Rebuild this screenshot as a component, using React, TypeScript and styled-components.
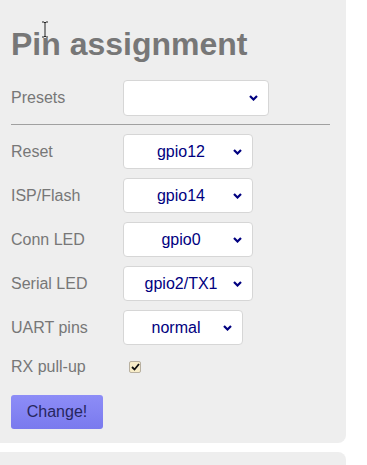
import React from "react";
import styled, { createGlobalStyle } from "styled-components";

const Global = createGlobalStyle`
  html, body { margin: 0; padding: 0; background: #ffffff; }
  body { font-family: "Liberation Sans", Arial, sans-serif; }
`;

const Page = styled.div`
  position: relative;
  width: 367px;
  height: 465px;
  overflow: hidden;
  display: flex;
  flex-direction: column;
  gap: 9px;
`;

const Panel = styled.section`
  width: 346px;
  box-sizing: border-box;
  background: #eeeeee;
  border-radius: 0 0 8px 0;
  padding: 26px 16px 14px 11px;
  display: flex;
  flex-direction: column;
`;

const NextPanel = styled.section`
  width: 346px;
  height: 40px;
  flex: none;
  background: #eeeeee;
  border-radius: 0 8px 0 0;
`;

const Title = styled.h1`
  margin: 0 0 17px 0;
  font-size: 32px;
  line-height: 37px;
  font-weight: bold;
  color: #777777;
`;

const Row = styled.div<{ $h?: number; $mb?: number }>`
  display: flex;
  align-items: center;
  height: ${(p) => p.$h ?? 35}px;
  margin-bottom: ${(p) => p.$mb ?? 9}px;
`;

const Label = styled.label`
  width: 112px;
  flex: none;
  font-size: 16px;
  color: #777777;
`;

const SelectBox = styled.div<{ $w: number; $h?: number }>`
  position: relative;
  width: ${(p) => p.$w}px;
  height: ${(p) => p.$h ?? 35}px;
  box-sizing: border-box;
  background: #ffffff;
  border: 1px solid #d6d6d6;
  border-radius: 4px;
  display: flex;
  align-items: center;
`;

const Select = styled.select`
  appearance: none;
  -webkit-appearance: none;
  border: none;
  background: transparent;
  outline: none;
  width: 100%;
  height: 100%;
  padding: 0 28px 0 14px;
  font-family: "Liberation Sans", Arial, sans-serif;
  font-size: 16px;
  color: #000080;
  text-align: center;
  text-align-last: center;
`;

const Chevron = styled.svg`
  position: absolute;
  right: 10px;
  top: 50%;
  margin-top: -3px;
  pointer-events: none;
`;

const Divider = styled.hr`
  margin: 0 0 9px 0;
  border: none;
  border-top: 1px solid #a0a0a0;
  height: 0;
  width: 319px;
`;

const Check = styled.span`
  margin-left: 6px;
  width: 12px;
  height: 12px;
  box-sizing: border-box;
  border: 1px solid #b8b0a0;
  border-radius: 2px;
  background: #f8edc9;
  display: flex;
  align-items: center;
  justify-content: center;
`;

const Button = styled.button`
  align-self: flex-start;
  width: 92px;
  height: 34px;
  border: none;
  border-radius: 3px;
  background: linear-gradient(#8d8df7, #7a7aee);
  color: #262660;
  font-family: "Liberation Sans", Arial, sans-serif;
  font-size: 16px;
  padding: 0;
`;

const Cursor = styled.svg`
  position: absolute;
  left: 41px;
  top: 21px;
`;

const ChevronIcon = () => (
  <Chevron width="9" height="6" viewBox="0 0 9 6">
    <path d="M1 1 L4.5 4.5 L8 1" fill="none" stroke="#000080" strokeWidth="2.2" />
  </Chevron>
);

const PinSelect = ({ w, value, h }: { w: number; value: string; h?: number }) => (
  <SelectBox $w={w} $h={h}>
    <Select defaultValue={value}>
      <option value={value}>{value}</option>
    </Select>
    <ChevronIcon />
  </SelectBox>
);

export default function App() {
  return (
    <Page>
      <Global />
      <Panel>
        <Title>Pin assignment</Title>
        <Row $h={36} $mb={8}>
          <Label>Presets</Label>
          <PinSelect w={146} h={36} value="" />
        </Row>
        <Divider />
        <Row>
          <Label>Reset</Label>
          <PinSelect w={130} value="gpio12" />
        </Row>
        <Row>
          <Label>ISP/Flash</Label>
          <PinSelect w={130} value="gpio14" />
        </Row>
        <Row>
          <Label>Conn LED</Label>
          <PinSelect w={130} value="gpio0" />
        </Row>
        <Row>
          <Label>Serial LED</Label>
          <PinSelect w={130} value="gpio2/TX1" />
        </Row>
        <Row>
          <Label>UART pins</Label>
          <PinSelect w={120} value="normal" />
        </Row>
        <Row $h={26} $mb={15}>
          <Label>RX pull-up</Label>
          <Check>
            <svg width="9" height="8" viewBox="0 0 9 8">
              <path d="M1 4 L3.5 6.5 L8 1" fill="none" stroke="#111" strokeWidth="1.8" />
            </svg>
          </Check>
        </Row>
        <Button>Change!</Button>
      </Panel>
      <NextPanel />
      <Cursor width="8" height="17" viewBox="0 0 8 17">
        <path d="M1 1 H3 L4 2 L5 1 H7 M4 2 V15 M1 16 H3 L4 15 L5 16 H7" fill="none" stroke="#222" strokeWidth="1" />
      </Cursor>
    </Page>
  );
}
